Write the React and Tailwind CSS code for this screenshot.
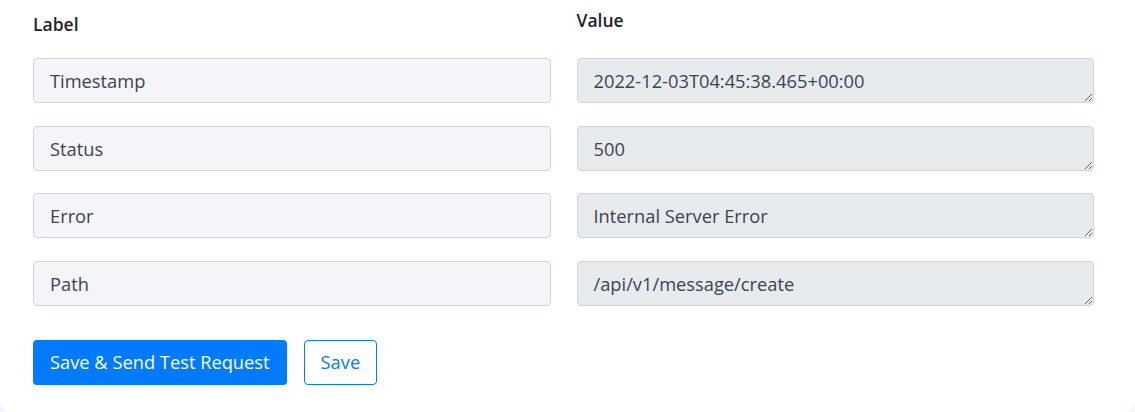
const ROWS = [
  { label: 'Timestamp', value: '2022-12-03T04:45:38.465+00:00' },
  { label: 'Status', value: '500' },
  { label: 'Error', value: 'Internal Server Error' },
  { label: 'Path', value: '/api/v1/message/create' },
]

export default function App() {
  return (
    <div className="min-h-[412px] bg-[#f5f6f8] font-['Open_Sans',sans-serif] text-[#3b4350]">
      <div className="bg-white rounded-b-xl h-[412px] pl-[33px] pr-[41px] pt-[8px]">
        <div className="grid grid-cols-2 gap-x-[26px]">
          <div className="text-[17.5px] font-semibold text-[#1f2329] pt-[4px] leading-6">Label</div>
          <div className="text-[17.5px] font-semibold text-[#1f2329] leading-6">Value</div>
        </div>

        <div className="mt-[22px] flex flex-col gap-[22.5px]">
          {ROWS.map((row) => (
            <div key={row.label} className="grid grid-cols-2 gap-x-[26px]">
              <input
                readOnly
                value={row.label}
                className="h-[45px] w-full rounded border border-[#cfd4da] bg-[#f3f5f8] px-4 text-[18.3px] text-[#3b4350] outline-none"
              />
              <textarea
                readOnly
                rows={1}
                value={row.value}
                className="h-[45px] w-full rounded border border-[#cfd4da] bg-[#e8ebee] px-4 pt-[10px] text-[18.3px] leading-6 text-[#3b4350] outline-none"
              />
            </div>
          ))}
        </div>

        <div className="mt-[34px] flex items-center gap-[17px]">
          <button className="h-[45px] rounded bg-[#007bff] px-[17px] text-[18.3px] text-white">
            Save &amp; Send Test Request
          </button>
          <button className="h-[45px] rounded border border-[#007bff] bg-white px-4 text-[18.3px] text-[#007bff]">
            Save
          </button>
        </div>
      </div>
    </div>
  )
}
